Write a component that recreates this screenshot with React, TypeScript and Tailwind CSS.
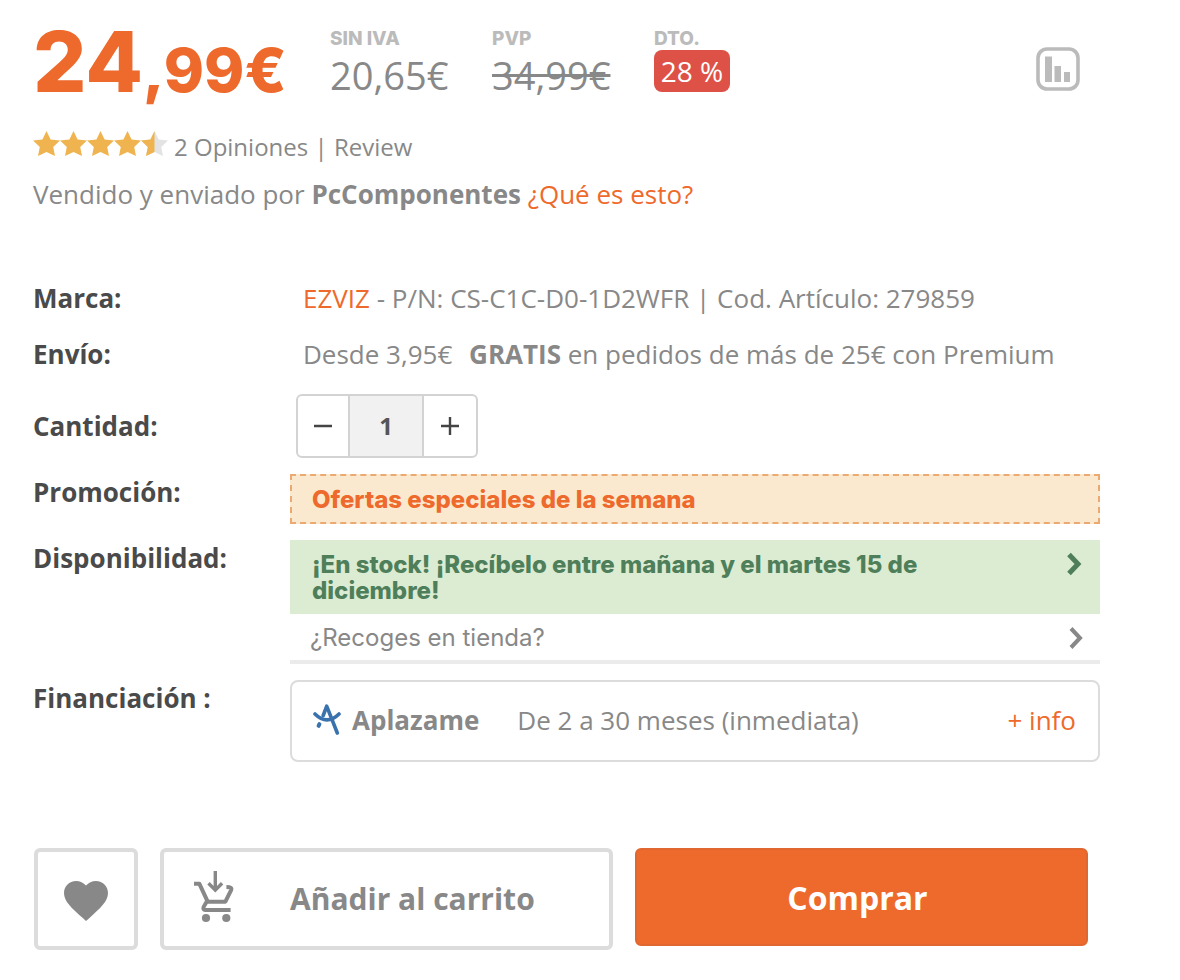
import { useState, type ReactNode } from "react";

function Star({ half = false }: { half?: boolean }) {
  const points = "13.5,0 17.6,8.6 27,9.6 20.2,16 22,25 13.5,21 5,25 6.8,16 0,9.6 9.4,8.6";
  return (
    <svg width="27" height="26" viewBox="0 0 27 26" aria-hidden="true">
      <polygon points={points} fill={half ? "#e3e3e3" : "#efb44f"} />
      {half && <polygon points="13.5,0 13.5,21 5,25 6.8,16 0,9.6 9.4,8.6" fill="#efb44f" />}
    </svg>
  );
}

function CompareIcon() {
  return (
    <svg width="44" height="44" viewBox="0 0 44 44" aria-hidden="true">
      <rect x="2" y="2" width="40" height="40" rx="9" fill="none" stroke="#bbb" strokeWidth="3.6" />
      <path d="M9 9.5h7V35H9zM18.5 19H25v16h-6.5zM28 25h6v10h-6z" fill="#bbb" />
    </svg>
  );
}

function CartIcon() {
  return (
    <svg width="40" height="52" viewBox="0 0 40 52" fill="none" stroke="#888" strokeWidth="4" aria-hidden="true">
      <path d="M0 12.7h5.3l8.4 18H31.4l5.6-11.4c1-2.2 0-3.4-4.6-3.4" strokeLinejoin="round" />
      <path d="M12.6 30.7l-2.9 5.2c-.9 1.8-.2 3 1.6 3H36.6" />
      <path d="M21.3 0v18M14.5 12.3l6.8 6.8 6.8-6.8" strokeWidth="3.4" />
      <circle cx="12" cy="47" r="4.1" fill="#888" stroke="none" />
      <circle cx="32.3" cy="47" r="4.1" fill="#888" stroke="none" />
    </svg>
  );
}

function AplazameIcon() {
  return (
    <svg width="28" height="32" viewBox="0 0 28 32" fill="none" stroke="#3a72ae" strokeWidth="3.6" strokeLinecap="round" strokeLinejoin="round" aria-hidden="true">
      <path d="M2 10q12 12 24 0" />
      <path d="M10.2 11.5l3.5-9.3L24.3 29" />
      <path d="M6.4 20.2l-.8 1.6" strokeWidth="4" />
    </svg>
  );
}

function Chevron({ width }: { width: number }) {
  return (
    <svg width="16" height="24" viewBox="0 0 16 24" fill="none" stroke="currentColor" strokeWidth={width} className="shrink-0" aria-hidden="true">
      <path d="M3 2.5l9 9.5-9 9.5" />
    </svg>
  );
}

function Row({ label, className = "", children }: { label: ReactNode; className?: string; children: ReactNode }) {
  return (
    <div className={`grid grid-cols-[257px_1fr] ${className}`}>
      <div className="font-bold leading-9 text-[#4a4a4a]">{label}</div>
      <div>{children}</div>
    </div>
  );
}

function PriceColumn({ label, children }: { label: string; children: ReactNode }) {
  return (
    <div className="w-[162px]">
      <div className="font-['Inter',sans-serif] text-[19px] font-extrabold leading-[22px] text-[#bbb]">{label}</div>
      {children}
    </div>
  );
}

export default function App() {
  const [quantity, setQuantity] = useState(1);

  return (
    <main className="bg-white pb-8 pl-[33px] pr-20 pt-7 font-['Open_Sans',sans-serif] text-[26px] text-[#888]">
      <header className="flex h-[72px] items-start">
        <div className="w-[297px] whitespace-nowrap font-['Inter',sans-serif] text-[61px] font-extrabold leading-[68px] text-[#ee6a2c]">
          <span className="text-[84px]">24</span>,99€
        </div>
        <PriceColumn label="SIN IVA">
          <div className="text-[38px] leading-[50px]">20,65€</div>
        </PriceColumn>
        <PriceColumn label="PVP">
          <del className="block text-[38px] leading-[50px]">34,99€</del>
        </PriceColumn>
        <PriceColumn label="DTO.">
          <div className="h-[42px] w-[76px] rounded-lg bg-[#de5147] text-center text-[28px] leading-[42px] text-white">28 %</div>
        </PriceColumn>
        <button type="button" aria-label="Comparar" className="ml-auto mr-5 mt-[19px]">
          <CompareIcon />
        </button>
      </header>

      <div className="mt-7 flex items-center gap-1.5 text-2xl leading-[38px]">
        <div className="flex pb-1.5">
          <Star />
          <Star />
          <Star />
          <Star />
          <Star half />
        </div>
        <p>
          <a href="#opiniones">2 Opiniones</a> | <a href="#review">Review</a>
        </p>
      </div>
      <p className="mt-[9px] leading-[38px]">
        Vendido y enviado por <strong>PcComponentes</strong>{" "}
        <a href="#vendedor" className="text-[#ee6a2c]">¿Qué es esto?</a>
      </p>

      <section className="mt-[66px] flex flex-col gap-4">
        <Row label="Marca:" className="items-center pb-0.5">
          <p className="pl-[13px] leading-[38px]">
            <a href="#ezviz" className="text-[#ee6a2c]">EZVIZ</a> - P/N: CS-C1C-D0-1D2WFR | Cod. Artículo: 279859
          </p>
        </Row>
        <Row label="Envío:" className="items-center pb-[5px]">
          <p className="pl-[13px] leading-[38px]">
            Desde 3,95€ <strong className="ml-2.5">GRATIS</strong> en pedidos de más de 25€ con Premium
          </p>
        </Row>
        <Row label={<label htmlFor="cantidad">Cantidad:</label>} className="items-center">
          <div className="ml-1.5 flex h-16 w-[182px] overflow-hidden rounded-md border-2 border-[#d3d3d3] text-[#444]">
            <button type="button" aria-label="Restar" className="flex w-[50px] items-center justify-center" onClick={() => setQuantity(Math.max(1, quantity - 1))}>
              <svg width="18" height="18" viewBox="0 0 18 18" stroke="currentColor" strokeWidth="2.4">
                <path d="M0 9h18" />
              </svg>
            </button>
            <input
              id="cantidad"
              type="text"
              value={quantity}
              onChange={(e) => setQuantity(Number(e.target.value) || 1)}
              className="w-[76px] border-x-2 border-[#d3d3d3] bg-[#f1f1f1] text-center text-2xl font-bold text-[#555]"
            />
            <button type="button" aria-label="Sumar" className="flex flex-1 items-center justify-center" onClick={() => setQuantity(quantity + 1)}>
              <svg width="18" height="18" viewBox="0 0 18 18" stroke="currentColor" strokeWidth="2.4">
                <path d="M0 9h18M9 0v18" />
              </svg>
            </button>
          </div>
        </Row>
        <Row label="Promoción:">
          <div className="border-2 border-dashed border-[#eaaa72] bg-[#fbe9cf] px-5 pt-0.5 font-['Inter',sans-serif] text-2xl font-extrabold leading-[44px] text-[#ee6a2c]">
            Ofertas especiales de la semana
          </div>
        </Row>
        <Row label="Disponibilidad:">
          <button type="button" className="flex w-full items-start justify-between bg-[#dcecd2] pb-2.5 pl-[22px] pr-[18px] pt-3 text-left font-['Inter',sans-serif] text-2xl font-extrabold leading-[26px] text-[#4f7f5a]">
            <span className="max-w-[640px]">¡En stock! ¡Recíbelo entre mañana y el martes 15 de diciembre!</span>
            <Chevron width={5} />
          </button>
          <button type="button" className="flex w-full items-center justify-between border-b-4 border-[#ebebeb] pl-5 pr-4 pt-0.5 text-left font-['Inter',sans-serif] text-2xl leading-[44px]">
            <span>¿Recoges en tienda?</span>
            <Chevron width={4} />
          </button>
        </Row>
        <Row label="Financiación :">
          <div className="flex h-[82px] items-center rounded-lg border-2 border-[#dcdcdc] pb-0.5 pl-[21px] pr-[22px]">
            <AplazameIcon />
            <strong className="ml-[11px]">Aplazame</strong>
            <span className="ml-[38px]">De 2 a 30 meses (inmediata)</span>
            <a href="#financiacion" className="ml-auto text-[#ee6a2c]">+ info</a>
          </div>
        </Row>
      </section>

      <div className="ml-px mr-3 mt-[86px] grid grid-cols-[104px_1fr_1fr] items-start gap-[22px] font-bold">
        <button type="button" aria-label="Favorito" className="flex h-[102px] items-center justify-center rounded-md border-4 border-[#dcdcdc] pt-1">
          <svg width="44" height="40" viewBox="2 3 20 18.35" fill="#888" preserveAspectRatio="none" aria-hidden="true">
            <path d="M12 21.35l-1.45-1.32C5.4 15.36 2 12.28 2 8.5 2 5.42 4.42 3 7.5 3c1.74 0 3.41.81 4.5 2.09C13.09 3.81 14.76 3 16.5 3 19.58 3 22 5.42 22 8.5c0 3.78-3.4 6.86-8.55 11.54L12 21.35z" />
          </svg>
        </button>
        <button type="button" className="flex h-[102px] items-center rounded-md border-4 border-[#dcdcdc] pb-1 pl-[30px] text-3xl">
          <CartIcon />
          <span className="ml-14 pt-1">Añadir al carrito</span>
        </button>
        <button type="button" className="h-[98px] rounded-md border-2 border-[#e0672f] bg-[#ee6a2c] pr-2 pt-0.5 text-[32px] text-white">
          Comprar
        </button>
      </div>
    </main>
  );
}
